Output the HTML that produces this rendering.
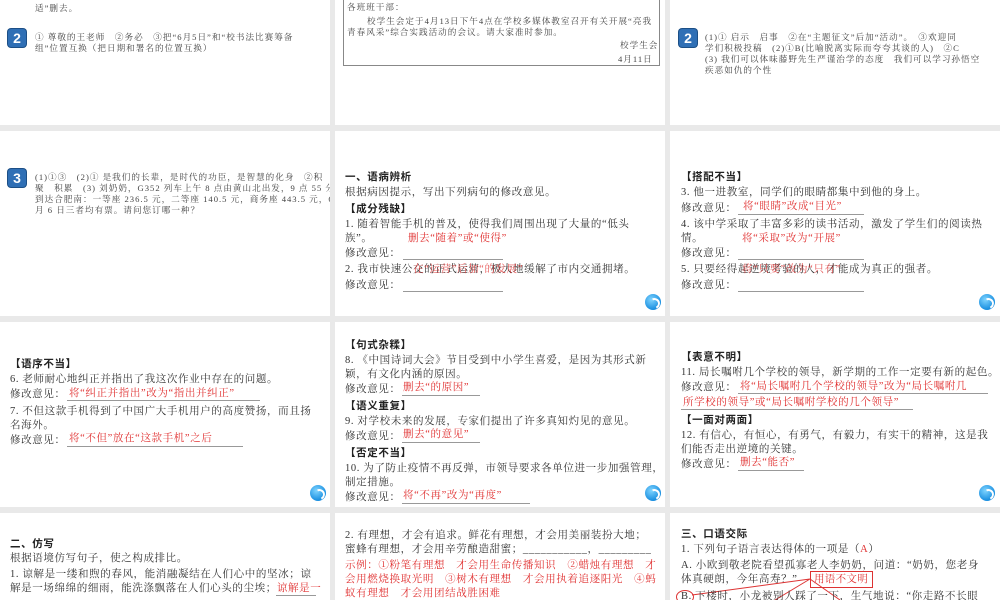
<!DOCTYPE html>
<html><head><meta charset="utf-8"><style>
*{margin:0;padding:0;box-sizing:border-box}
body{width:1000px;height:600px;background:#e9e9e9;position:relative;overflow:hidden;font-family:"Liberation Serif","Noto Serif CJK SC","Noto Sans CJK SC",serif;color:#333}
.c{position:absolute;background:#fff;overflow:hidden}
.t{position:absolute;white-space:nowrap;font-size:10.5px;line-height:12px;letter-spacing:0.62px}
.s{font-size:8.6px;line-height:10px;letter-spacing:1.0px;color:#444}
.b{font-family:"Liberation Sans","Noto Sans CJK SC",sans-serif;font-weight:bold;color:#222}
.r{color:#e03030}
.u{position:absolute;border-bottom:1px solid #999;height:1px}
.badge{position:absolute;width:18px;height:18px;border-radius:3px;background:#2f6fb5;color:#fff;font:bold 14px/18px "Liberation Sans",sans-serif;text-align:center;box-shadow:0 0 0 1px #1c4f86;letter-spacing:0}
.ic{position:absolute;width:16px;height:16px;border-radius:50%;background:radial-gradient(circle at 40% 35%,#7fd4ff,#1a8fe0 70%);}
.ic:after{content:"";position:absolute;left:4px;top:4px;width:7px;height:7px;border:2px solid #fff;border-left-color:transparent;border-bottom-color:transparent;border-radius:50%;transform:rotate(20deg)}
</style></head><body>
<!-- row1 -->
<div class="c" style="left:0;top:0;width:330px;height:125px">
<div class="t s" style="left:35px;top:3px">适”删去。</div>
<div class="badge" style="left:8px;top:29px">2</div>
<div class="t s" style="left:35px;top:32px">① 尊敬的王老师　②务必　③把“6月5日”和“校书法比赛筹备</div>
<div class="t s" style="left:35px;top:43px">组”位置互换（把日期和署名的位置互换）</div>
</div>
<div class="c" style="left:335px;top:0;width:330px;height:125px">
<div style="position:absolute;left:8px;top:-2px;width:317px;height:68px;border:1px solid #888"></div>
<div class="t s" style="left:12px;top:2px">各班班干部：</div>
<div class="t s" style="left:32px;top:16px">校学生会定于4月13日下午4点在学校多媒体教室召开有关开展“亮我</div>
<div class="t s" style="left:12px;top:27px">青春风采”综合实践活动的会议。请大家准时参加。</div>
<div class="t s" style="left:285px;top:40px">校学生会</div>
<div class="t s" style="left:283px;top:54px">4月11日</div>
</div>
<div class="c" style="left:670px;top:0;width:330px;height:125px">
<div class="badge" style="left:9px;top:29px">2</div>
<div class="t s" style="left:35px;top:32px">(1)① 启示　启事　②在“主题征文”后加“活动”。　③欢迎同</div>
<div class="t s" style="left:35px;top:43px">学们积极投稿　(2)①B(比喻脱离实际而夸夸其谈的人)　②C</div>
<div class="t s" style="left:35px;top:54px">(3) 我们可以体味藤野先生严谨治学的态度　我们可以学习孙悟空</div>
<div class="t s" style="left:35px;top:65px">疾恶如仇的个性</div>
</div>
<!-- row2 -->
<div class="c" style="left:0;top:131px;width:330px;height:185px">
<div class="badge" style="left:8px;top:38px">3</div>
<div class="t s" style="left:35px;top:41px">(1)①③　(2)① 是我们的长辈，是时代的功臣，是智慧的化身　②积</div>
<div class="t s" style="left:35px;top:52px">聚　积累　(3) 刘奶奶，G352 列车上午 8 点由黄山北出发，9 点 55 分</div>
<div class="t s" style="left:35px;top:63px">到达合肥南：一等座 236.5 元，二等座 140.5 元，商务座 443.5 元，6</div>
<div class="t s" style="left:35px;top:74px">月 6 日三者均有票。请问您订哪一种？</div>
</div>
<div class="c" style="left:335px;top:131px;width:330px;height:185px">
<div class="t b" style="left:10px;top:40px">一、语病辨析</div>
<div class="t" style="left:10px;top:56px">根据病因提示，写出下列病句的修改意见。</div>
<div class="t b" style="left:10px;top:72px">【成分残缺】</div>
<div class="t" style="left:10px;top:88px">1. 随着智能手机的普及，使得我们周围出现了大量的“低头</div>
<div class="t" style="left:10px;top:102px">族”。</div>
<div class="t r" style="left:73px;top:102px">删去“随着”或“使得”</div>
<div class="t" style="left:10px;top:117px">修改意见：</div><div class="u" style="left:68px;top:128px;width:100px"></div>
<div class="t" style="left:10px;top:133px">2. 我市快速公交的正式运营，极大地缓解了市内交通拥堵。</div>
<div class="t r" style="left:78px;top:133px;opacity:.8">在“运营”后加“的发展”</div>
<div class="t" style="left:10px;top:149px">修改意见：</div><div class="u" style="left:68px;top:160px;width:100px"></div>
<div class="ic" style="left:310px;top:163px"></div>
</div>
<div class="c" style="left:670px;top:131px;width:330px;height:185px">
<div class="t b" style="left:11px;top:40px">【搭配不当】</div>
<div class="t" style="left:11px;top:56px">3. 他一进教室，同学们的眼睛都集中到他的身上。</div>
<div class="t" style="left:11px;top:72px">修改意见：</div><div class="u" style="left:68px;top:83px;width:126px"></div>
<div class="t r" style="left:73px;top:70px">将“眼睛”改成“目光”</div>
<div class="t" style="left:11px;top:88px">4. 该中学采取了丰富多彩的读书活动，激发了学生们的阅读热</div>
<div class="t" style="left:11px;top:102px">情。</div>
<div class="t r" style="left:72px;top:102px">将“采取”改为“开展”</div>
<div class="t" style="left:11px;top:117px">修改意见：</div><div class="u" style="left:68px;top:128px;width:126px"></div>
<div class="t" style="left:11px;top:133px">5. 只要经得起逆境考验的人，才能成为真正的强者。</div>
<div class="t r" style="left:72px;top:133px;opacity:.8">将“只要”改为“只有”</div>
<div class="t" style="left:11px;top:149px">修改意见：</div><div class="u" style="left:68px;top:160px;width:126px"></div>
<div class="ic" style="left:309px;top:163px"></div>
</div>
<!-- row3 -->
<div class="c" style="left:0;top:322px;width:330px;height:185px">
<div class="t b" style="left:10px;top:36px">【语序不当】</div>
<div class="t" style="left:10px;top:52px">6. 老师耐心地纠正并指出了我这次作业中存在的问题。</div>
<div class="t" style="left:10px;top:67px">修改意见：</div><div class="u" style="left:67px;top:78px;width:193px"></div>
<div class="t r" style="left:69px;top:66px">将“纠正并指出”改为“指出并纠正”</div>
<div class="t" style="left:10px;top:84px">7. 不但这款手机得到了中国广大手机用户的高度赞扬，而且扬</div>
<div class="t" style="left:10px;top:98px">名海外。</div>
<div class="t" style="left:10px;top:113px">修改意见：</div><div class="u" style="left:67px;top:124px;width:176px"></div>
<div class="t r" style="left:69px;top:111px">将“不但”放在“这款手机”之后</div>
<div class="ic" style="left:310px;top:163px"></div>
</div>
<div class="c" style="left:335px;top:322px;width:330px;height:185px">
<div class="t b" style="left:10px;top:17px">【句式杂糅】</div>
<div class="t" style="left:10px;top:33px">8. 《中国诗词大会》节目受到中小学生喜爱，是因为其形式新</div>
<div class="t" style="left:10px;top:47px">颖，有文化内涵的原因。</div>
<div class="t" style="left:10px;top:62px">修改意见：</div><div class="u" style="left:67px;top:73px;width:78px"></div>
<div class="t r" style="left:68px;top:60px">删去“的原因”</div>
<div class="t b" style="left:10px;top:78px">【语义重复】</div>
<div class="t" style="left:10px;top:94px">9. 对学校未来的发展，专家们提出了许多真知灼见的意见。</div>
<div class="t" style="left:10px;top:109px">修改意见：</div><div class="u" style="left:67px;top:120px;width:78px"></div>
<div class="t r" style="left:68px;top:107px">删去“的意见”</div>
<div class="t b" style="left:10px;top:125px">【否定不当】</div>
<div class="t" style="left:10px;top:141px">10. 为了防止疫情不再反弹，市领导要求各单位进一步加强管理，</div>
<div class="t" style="left:10px;top:155px">制定措施。</div>
<div class="t" style="left:10px;top:170px">修改意见：</div><div class="u" style="left:67px;top:181px;width:128px"></div>
<div class="t r" style="left:68px;top:168px">将“不再”改为“再度”</div>
<div class="ic" style="left:310px;top:163px"></div>
</div>
<div class="c" style="left:670px;top:322px;width:330px;height:185px">
<div class="t b" style="left:11px;top:29px">【表意不明】</div>
<div class="t" style="left:11px;top:45px">11. 局长嘱咐几个学校的领导，新学期的工作一定要有新的起色。</div>
<div class="t" style="left:11px;top:60px">修改意见：</div><div class="u" style="left:68px;top:71px;width:250px"></div>
<div class="t r" style="left:70px;top:59px">将“局长嘱咐几个学校的领导”改为“局长嘱咐几</div>
<div class="t r" style="left:13px;top:75px">所学校的领导”或“局长嘱咐学校的几个领导”</div><div class="u" style="left:11px;top:87px;width:232px"></div>
<div class="t b" style="left:11px;top:92px">【一面对两面】</div>
<div class="t" style="left:11px;top:108px">12. 有信心，有恒心，有勇气，有毅力，有实干的精神，这是我</div>
<div class="t" style="left:11px;top:122px">们能否走出逆境的关键。</div>
<div class="t" style="left:11px;top:137px">修改意见：</div><div class="u" style="left:68px;top:148px;width:66px"></div>
<div class="t r" style="left:70px;top:135px">删去“能否”</div>
<div class="ic" style="left:309px;top:163px"></div>
</div>
<!-- row4 -->
<div class="c" style="left:0;top:513px;width:330px;height:87px">
<div class="t b" style="left:10px;top:25px">二、仿写</div>
<div class="t" style="left:10px;top:40px">根据语境仿写句子，使之构成排比。</div>
<div class="t" style="left:10px;top:56px">1. 谅解是一缕和煦的春风，能消融凝结在人们心中的坚冰；谅</div>
<div class="t" style="left:10px;top:70px">解是一场绵绵的细雨，能洗涤飘落在人们心头的尘埃；<span class="r">谅解是一</span></div>
<div class="u" style="left:276px;top:82px;width:40px"></div>
</div>
<div class="c" style="left:335px;top:513px;width:330px;height:87px">
<div class="t" style="left:10px;top:17px">2. 有理想，才会有追求。鲜花有理想，才会用美丽装扮大地；</div>
<div class="t" style="left:10px;top:31px">蜜蜂有理想，才会用辛劳酿造甜蜜；___________，_________</div>
<div class="t r" style="left:10px;top:47px">示例：①粉笔有理想　才会用生命传播知识　②蜡烛有理想　才</div>
<div class="t r" style="left:10px;top:61px">会用燃烧换取光明　③树木有理想　才会用执着追逐阳光　④蚂</div>
<div class="t r" style="left:10px;top:75px">蚁有理想　才会用团结战胜困难</div>
</div>
<div class="c" style="left:670px;top:513px;width:330px;height:87px">
<div class="t b" style="left:11px;top:15px">三、口语交际</div>
<div class="t" style="left:11px;top:31px">1. 下列句子语言表达得体的一项是（<span class="r">A</span>）</div>
<div class="t" style="left:11px;top:47px">A. 小欧到敬老院看望孤寡老人李奶奶，问道：“奶奶，您老身</div>
<div class="t" style="left:11px;top:61px">体真硬朗，今年高寿？”</div>
<div style="position:absolute;left:140px;top:58px;width:63px;height:17px;border:1.5px solid #d33"></div>
<div class="t r" style="left:144px;top:61px;letter-spacing:0.3px">用语不文明</div>
<svg style="position:absolute;left:0;top:0" width="330" height="87"><path d="M140 66 L22 82 M140 66 L105 87 M140 66 L170 87" stroke="#d33" stroke-width="1" fill="none"/></svg>
<div style="position:absolute;left:6px;top:77px;width:18px;height:14px;border:1.5px solid #d33;border-radius:50%"></div>
<div class="t" style="left:11px;top:78px">B. 下楼时，小龙被别人踩了一下，生气地说：“你走路不长眼</div>
</div>
</body></html>
